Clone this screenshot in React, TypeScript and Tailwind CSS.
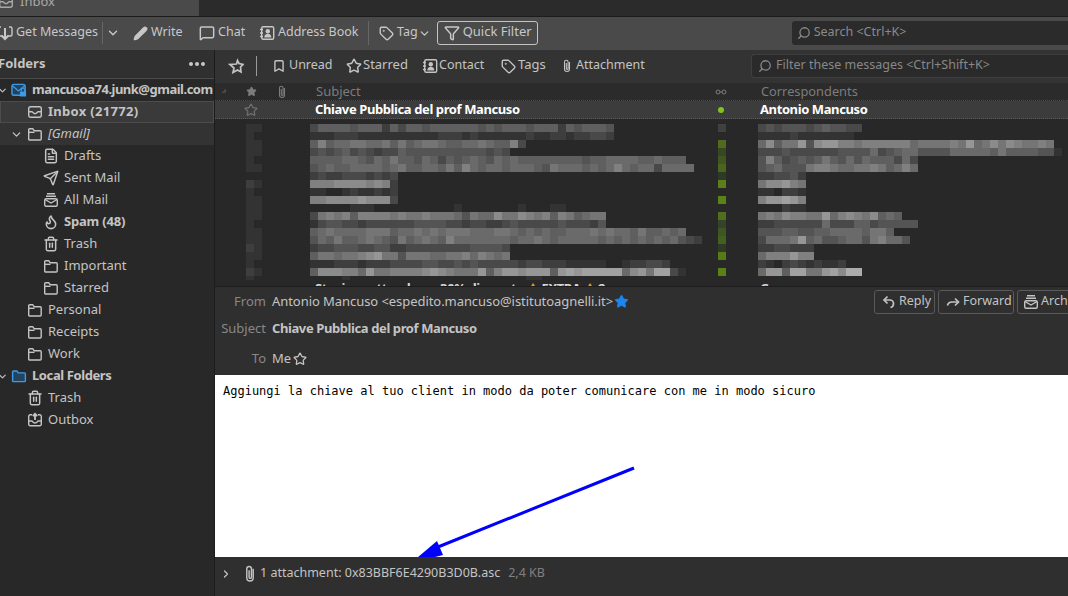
import type { ReactNode } from "react";
import {
  Bookmark,
  ChevronDown,
  ChevronRight,
  FileText,
  Flame,
  Funnel,
  MessageSquare,
  Pencil,
  Search,
  Send,
  Star,
  Tag,
  Trash2,
} from "lucide-react";

const subjectRows = [
  "35555455525355455555545455545552545554",
  "11122211111111112221211111121122122332",
  "585667766757567765566765583",
  "3434534323354444444444343",
  "55556654657554653545654656555555554556666556555",
  "456556666567556657586566566654766656568656636666",
  "23223332323",
  "88899998982",
  "11001211212",
  "889999a9993",
  "00000111000000000010000000100011000000",
  "3787858888787787776476697798785875677",
  "1344332333333444433233223433333433324",
  "56766667775667676777666776565655666767665755656",
  "4657556765475676586666666566765666665656565656432",
  "2334443344223333333344443",
  "57767789a7747776677868767",
  "111222122233334433434333332332221111100122332",
  "5999886a7788889a98777a58aa9aaa5ababbbbb69a7bb31",
  "0000100000000000000000000001100000000000000",
];

const correspondentRows = [
  "3434443454433",
  "1111211111110",
  "69577a49aa8878888886777787a6797987787",
  "33343333334444634566444466666575555441",
  "48534545754646555363",
  "45644478876677875686",
  "223342",
  "799a87",
  "110221",
  "8aaba8",
  "0002110000000",
  "78798877a689879565",
  "22333333633355344444",
  "44455445566665775",
  "36667a5644566478664",
  "2233222",
  "6888a88",
  "21023212112",
  "6aa5bb77ab9cc",
];

const greens = [
  "#404040", "", "#4f6b1f", "#37471f", "#3f5522", "#4a661e", "#2f3a26", "#5a7f1a", "",
  "#5c8215", "", "#4f6f1f", "#34432a", "#3f5522", "#44601f", "#2f3a26", "#557a16", "", "#5a8016",
];

const starRows = ["11", "10", "11", "11", "10", "11", "00", "21", "10", "11", "11", "11", "10", "11", "11", "21", "11", "10", "21", "10"];

const shade = (c: string) => {
  const v = 0x28 + parseInt(c, 16) * 11;
  return `rgb(${v},${v},${v})`;
};

function Pixels({ rows }: { rows: string[] }) {
  return (
    <div className="flex flex-col">
      {rows.map((row, i) => (
        <div key={i} className="flex h-[8px]">
          {row.split("").map((c, j) => (
            <div key={j} className="h-[8px] w-[8px]" style={{ backgroundColor: shade(c) }} />
          ))}
        </div>
      ))}
    </div>
  );
}

function GetMessagesIcon() {
  return (
    <svg className="shrink-0" width="16" height="16" viewBox="0 0 16 16" fill="none" stroke="currentColor" strokeWidth="1.4">
      <path d="M4 2H2.500A1.500 1.500 0 0 0 1 3.500v6A1.500 1.500 0 0 0 2.500 11H5M11 11h2.500A1.500 1.500 0 0 0 15 9.500v-6A1.500 1.500 0 0 0 13.500 2H12" />
      <path d="M8 3v11M4.500 10.500 8 14l3.500-3.500" strokeWidth="2" />
    </svg>
  );
}

function PinStarIcon() {
  return (
    <svg width="16" height="16" viewBox="0 0 16 16" fill="none" stroke="currentColor" strokeWidth="1.700">
      <path d="M9.500 2.500 8.500 6 2 6.500l4 3.500-1 4.500 4.500-2.500 3.500 2-.5-5 2.500-2.500-4-1z" />
    </svg>
  );
}

function FolderIcon({ className = "" }: { className?: string }) {
  return (
    <svg className={className} width="16" height="16" viewBox="0 0 16 16" fill="none" stroke="currentColor" strokeWidth="1.400">
      <path d="M1.700 13V3.700a1 1 0 0 1 1-1h3l1.500 2h6a1 1 0 0 1 1 1V13a1 1 0 0 1-1 1H2.700a1 1 0 0 1-1-1z" />
      <path d="M2 6.300h5.500" />
    </svg>
  );
}

function ClipIcon({ className = "", size = 14 }: { className?: string; size?: number }) {
  return (
    <svg className={`shrink-0 ${className}`} width={size} height={size} viewBox="0 0 14 14" fill="none" stroke="currentColor" strokeWidth="1.100">
      <path d="M9.500 3v7a2.500 2.500 0 0 1-5 0V3a1.800 1.800 0 0 1 3.600 0v6.500a.9.900 0 0 1-1.800 0V4" />
    </svg>
  );
}

function ContactIcon() {
  return (
    <svg className="shrink-0" width="16" height="16" viewBox="0 0 16 16" fill="none" stroke="currentColor" strokeWidth="1.400">
      <rect x="2.700" y="1.700" width="12" height="12.600" rx="1.500" />
      <path d="M1 4.500h3M1 8h3M1 11.500h3" />
      <circle cx="8.800" cy="6.300" r="2.200" fill="currentColor" stroke="none" />
      <path d="M5.300 12.500c0-2.600 1.500-3.700 3.500-3.700s3.500 1.100 3.500 3.700z" fill="currentColor" stroke="none" />
    </svg>
  );
}

function GlassesIcon() {
  return (
    <svg width="12" height="8" viewBox="0 0 12 8" fill="none" stroke="currentColor" strokeWidth="1">
      <circle cx="3" cy="4" r="2" />
      <circle cx="9" cy="4" r="2" />
      <path d="M5 4h2" />
    </svg>
  );
}

function AllMailIcon({ className = "" }: { className?: string }) {
  return (
    <svg className={`shrink-0 ${className}`} width="16" height="16" viewBox="0 0 16 16" fill="none" stroke="currentColor" strokeWidth="1.400">
      <path d="M4 1.700h8M3 4.200h10" />
      <rect x="1.700" y="6.700" width="12.600" height="7.600" rx="1.500" />
      <path d="M2 7.500 8 11l6-3.500" />
    </svg>
  );
}

function InboxIcon() {
  return (
    <svg className="shrink-0" width="16" height="16" viewBox="0 0 16 16" fill="none" stroke="currentColor" strokeWidth="1.400">
      <rect x="1.700" y="2.700" width="12.600" height="10.600" rx="2" />
      <path d="M2 7.700h3c.6 0 .7 2 3 2s2.400-2 3-2h3" />
    </svg>
  );
}

function OutboxIcon() {
  return (
    <svg width="16" height="16" viewBox="0 0 16 16" fill="none" stroke="currentColor" strokeWidth="1.400">
      <path d="M5 2.700H3.200A1.500 1.500 0 0 0 1.700 4.200v8.100a1.500 1.500 0 0 0 1.500 1.500h9.600a1.500 1.500 0 0 0 1.500-1.500V4.200a1.500 1.500 0 0 0-1.500-1.500H11" />
      <path d="M2 9h3c.6 0 .7 2 3 2s2.400-2 3-2h3" />
      <path d="M8 8V2M5.800 4 8 1.800 10.200 4" strokeWidth="1.800" />
    </svg>
  );
}

function AccountIcon() {
  return (
    <svg width="17" height="15" viewBox="0 0 17 15" fill="none">
      <rect x="1" y="1" width="14" height="11.500" rx="2" fill="#24435e" stroke="#3b9be8" strokeWidth="1.500" />
      <path d="M1.500 2.500 8 8l6.500-5.500" stroke="#3b9be8" strokeWidth="1.400" />
      <rect x="9.500" y="8.500" width="6.500" height="5.500" rx="1" fill="#3b9be8" />
      <path d="M11 8.500V7a1.700 1.700 0 0 1 3.400 0v1.500" stroke="#3b9be8" strokeWidth="1.100" />
    </svg>
  );
}

function ReplyIcon() {
  return (
    <svg className="shrink-0" width="14" height="14" viewBox="0 0 14 14" fill="none" stroke="currentColor" strokeWidth="1.700">
      <path d="M5.500 1.500 2 5l3.500 3.500" />
      <path d="M2.500 5H8a3.500 3.500 0 0 1 3.500 3.500c0 2-1 3.500-3 4" />
    </svg>
  );
}

function ForwardIcon() {
  return (
    <svg className="shrink-0" width="14" height="14" viewBox="0 0 14 14" fill="none" stroke="currentColor" strokeWidth="1.700">
      <path d="M9 3.500 12.500 7 9 10.500" />
      <path d="M12 7H6c-2.500 0-4 1.200-4.500 3.500" />
    </svg>
  );
}

function ToolItem({ icon, label, className = "" }: { icon: ReactNode; label: string; className?: string }) {
  return (
    <div className={`flex shrink-0 items-center whitespace-nowrap ${className}`}>
      {icon}
      <span className="pb-[2px]">{label}</span>
    </div>
  );
}

function FolderRow({
  icon,
  label,
  indent,
  gap = "w-[5px]",
  className = "",
  twisty,
}: {
  icon: ReactNode;
  label: string;
  indent: string;
  gap?: string;
  className?: string;
  twisty?: ReactNode;
}) {
  return (
    <div className={`flex h-[22px] shrink-0 items-center whitespace-nowrap text-[13px] text-[#c4c4c4] ${className}`}>
      <div className={`flex shrink-0 items-center justify-end ${indent}`}>{twisty}</div>
      <div className="flex w-[16px] shrink-0 justify-center">{icon}</div>
      <div className={`shrink-0 ${gap}`} />
      {label}
    </div>
  );
}

function HeaderButton({ icon, label, className = "" }: { icon: ReactNode; label: string; className?: string }) {
  return (
    <div className={`flex h-[24px] shrink-0 items-center gap-[2px] overflow-hidden whitespace-nowrap rounded-[3px] border border-[#5a5a5a] pl-[7px] text-[12.5px] text-[#c4c4c4] ${className}`}>
      {icon}
      <span className="pb-[2px]">{label}</span>
    </div>
  );
}

export default function App() {
  const folderIcon = <FolderIcon />;
  return (
    <div className="flex h-[596px] w-[1068px] flex-col overflow-hidden bg-[#282828] font-['Noto_Sans',sans-serif] text-[#c4c4c4]">
      <div className="flex h-[17px] shrink-0 border-b border-[#1c1c1c] bg-[#2b2b2b]">
        <div className="flex h-[16px] w-[199px] items-center overflow-hidden bg-[#4a4a4a]">
          <div className="-ml-[2px] flex -translate-y-[6px] items-center gap-[6px] text-[13px] text-[#a8a8a8]">
            <InboxIcon />
            <span>Inbox</span>
          </div>
        </div>
      </div>

      <div className="flex h-[33px] shrink-0 items-center overflow-hidden bg-[#4a4a4a] pb-[1px] text-[12.5px] text-[#c8c8c8]">
        <ToolItem className="-ml-[3px] w-[105px] gap-[3px]" icon={<GetMessagesIcon />} label="Get Messages" />
        <div className="h-[22px] w-px bg-[#666]" />
        <ChevronDown className="ml-[3px]" size={14} strokeWidth={2.4} />
        <ToolItem className="ml-[13px] w-[66px] gap-[3px]" icon={<Pencil size={15} strokeWidth={2} fill="currentColor" />} label="Write" />
        <ToolItem className="w-[60px] gap-[3px]" icon={<MessageSquare size={16} strokeWidth={2.2} />} label="Chat" />
        <ToolItem className="w-[109px] gap-[3px]" icon={<ContactIcon />} label="Address Book" />
        <div className="h-[24px] w-px bg-[#666]" />
        <ToolItem className="ml-[10px] gap-[3px]" icon={<Tag size={15} strokeWidth={2.2} />} label="Tag" />
        <ChevronDown size={13} strokeWidth={2.4} />
        <div className="ml-[6px] flex h-[24px] w-[101px] items-center gap-[3px] rounded-[3px] border border-[#c4c4c4] pl-[6px] text-[13px]">
          <Funnel size={16} strokeWidth={2.2} />
          <span className="pb-[2px]">Quick Filter</span>
        </div>
        <div className="ml-[254px] flex h-[24px] flex-1 items-center gap-[3px] rounded-l-[3px] bg-[#2b2b2b] pl-[5px] text-[#8a8a8a]">
          <Search className="-scale-x-100" size={14} strokeWidth={2.2} />
          <span className="pb-[2px]">Search &lt;Ctrl+K&gt;</span>
        </div>
      </div>

      <div className="flex min-h-0 flex-1">
        <div className="flex w-[215px] shrink-0 flex-col overflow-hidden border-r border-[#1c1c1c]">
          <div className="flex h-[29px] shrink-0 items-center justify-between border-b border-[#4a4a4a] bg-[#303030] pr-[9px]">
            <span className="-ml-[2px] text-[13px] font-bold text-[#c4c4c4]">Folders</span>
            <span className="flex gap-[2px]">
              <i className="h-[4px] w-[4px] rounded-full bg-[#c8c8c8]" />
              <i className="h-[4px] w-[4px] rounded-full bg-[#c8c8c8]" />
              <i className="h-[4px] w-[4px] rounded-full bg-[#c8c8c8]" />
            </span>
          </div>
          <FolderRow
            className="font-bold tracking-[-0.5px]"
            indent="w-[11px]"
            twisty={<ChevronDown className="-translate-x-[3px]" size={11} strokeWidth={2.4} />}
            icon={<AccountIcon />}
            label="mancusoa74.junk@gmail.com"
          />
          <FolderRow
            className="border border-[#4c4c4c] bg-[#3a3a3a] font-bold tracking-[0.3px]"
            indent="w-[26px]"
            icon={<InboxIcon />}
            label="Inbox (21772)"
          />
          <FolderRow
            className="bg-[#333333] italic text-[#8c8c8c]"
            indent="w-[27px]"
            twisty={<ChevronDown className="mr-[4px] text-[#c4c4c4]" size={13} strokeWidth={2.4} />}
            icon={<FolderIcon className="text-[#c4c4c4]" />}
            label="[Gmail]"
          />
          <FolderRow indent="w-[43px]" icon={<FileText size={16} strokeWidth={2.2} />} label="Drafts" />
          <FolderRow indent="w-[43px]" icon={<Send size={16} strokeWidth={2.2} />} label="Sent Mail" />
          <FolderRow indent="w-[43px]" icon={<AllMailIcon />} label="All Mail" />
          <FolderRow className="font-bold tracking-[-0.2px]" indent="w-[43px]" icon={<Flame size={16} strokeWidth={2.4} />} label="Spam (48)" />
          <FolderRow indent="w-[43px]" icon={<Trash2 size={16} strokeWidth={2.2} />} label="Trash" />
          <FolderRow indent="w-[43px]" icon={folderIcon} label="Important" />
          <FolderRow indent="w-[43px]" icon={folderIcon} label="Starred" />
          <FolderRow indent="w-[27px]" icon={folderIcon} label="Personal" />
          <FolderRow indent="w-[27px]" icon={folderIcon} label="Receipts" />
          <FolderRow indent="w-[27px]" icon={folderIcon} label="Work" />
          <FolderRow
            className="font-bold tracking-[-0.4px]"
            indent="w-[11px]"
            twisty={<ChevronDown className="-translate-x-[3px]" size={11} strokeWidth={2.4} />}
            icon={
              <svg width="17" height="16" viewBox="0 0 17 16" fill="#24435e" stroke="#3b9be8" strokeWidth="1.500">
                <path d="M1.700 13V3.700a1 1 0 0 1 1-1h3.500l1.500 2h6.600a1 1 0 0 1 1 1V13a1 1 0 0 1-1 1H2.700a1 1 0 0 1-1-1z" />
              </svg>
            }
            label="Local Folders"
          />
          <FolderRow indent="w-[27px]" icon={<Trash2 size={16} strokeWidth={2.2} />} label="Trash" />
          <FolderRow indent="w-[27px]" icon={<OutboxIcon />} label="Outbox" />
        </div>

        <div className="flex min-w-0 flex-1 flex-col">
          <div className="flex h-[33px] shrink-0 items-center overflow-hidden bg-[#333333] pb-[1px] text-[13px] text-[#c4c4c4]">
            <div className="ml-[13px] flex w-[28px]">
              <PinStarIcon />
            </div>
            <div className="h-[20px] w-px bg-[#9a9a9a]" />
            <ToolItem className="ml-[15px] w-[74px] gap-[3px] text-[12.5px]" icon={<Bookmark size={14} strokeWidth={2.4} />} label="Unread" />
            <ToolItem className="w-[76px] gap-[1px]" icon={<Star size={16} strokeWidth={2.2} />} label="Starred" />
            <ToolItem className="w-[79px] gap-[1px] text-[12.5px]" icon={<ContactIcon />} label="Contact" />
            <ToolItem className="w-[59px] gap-[2px]" icon={<Tag size={15} strokeWidth={2.2} />} label="Tags" />
            <ToolItem className="w-[100px] gap-[2px] text-[12.5px]" icon={<ClipIcon />} label="Attachment" />
            <div className="ml-[91px] flex h-[24px] flex-1 items-center gap-[4px] rounded-l-[3px] border border-r-0 border-[#3e3e3e] bg-[#2a2a2a] pl-[6px] text-[12.5px] text-[#888888]">
              <Search className="-scale-x-100" size={14} strokeWidth={2.2} />
              <span className="whitespace-nowrap pb-[2px]">Filter these messages &lt;Ctrl+Shift+K&gt;</span>
            </div>
          </div>

          <div className="flex h-[18px] shrink-0 items-center border-b border-dotted border-[#4a4a4a] bg-[#2b2b2b] text-[13px] text-[#7c7c7c]">
            <ChevronRight className="ml-[6px] rotate-45" size={7} strokeWidth={2.4} />
            <Star className="ml-[18px]" size={11} strokeWidth={2} fill="currentColor" />
            <ClipIcon className="ml-[18px]" />
            <span className="ml-[27px] w-[399px]">Subject</span>
            <div className="w-[46px]">
              <GlassesIcon />
            </div>
            <span className="text-[12.8px]">Correspondents</span>
          </div>

          <div className="flex h-[18px] shrink-0 items-center border-b border-dotted border-[#5a5a5a] bg-[#3c3c3c] text-[13px] font-bold tracking-[-0.4px] text-white">
            <Star className="ml-[29px] text-[#6e6e6e]" size={14} strokeWidth={2.2} />
            <span className="ml-[57px] w-[403px]">Chiave Pubblica del prof Mancuso</span>
            <span className="h-[6px] w-[6px] rounded-full bg-[#7fc41c]" />
            <span className="ml-[36px]">Antonio Mancuso</span>
          </div>

          <div className="flex h-[167px] shrink-0 flex-col overflow-hidden">
            <div className="flex h-[161px] shrink-0 overflow-hidden pt-[5px]">
              <div className="ml-[31px] w-[64px] shrink-0">
                <Pixels rows={starRows} />
              </div>
              <div className="w-[408px] shrink-0">
                <Pixels rows={subjectRows} />
              </div>
              <div className="w-[40px] shrink-0">
                {greens.map((c, i) => (
                  <div key={i} className="h-[8px] w-[8px]" style={{ backgroundColor: c || "#282828" }} />
                ))}
              </div>
              <div className="flex min-w-0 flex-1 flex-col">
                <Pixels rows={correspondentRows} />
              </div>
            </div>
            <div className="flex h-[18px] shrink-0 items-center text-[13px] font-bold tracking-[-0.4px] text-[#d8d8d8]">
              <span className="ml-[100px] w-[403px] whitespace-nowrap">
                Stavi aspettando un 30% di sconto <span className="text-[#f0a000]">⚠</span> EXTRA <span className="text-[#f0a000]">⚠</span> 2
              </span>
              <span className="h-[6px] w-[6px] rounded-full bg-[#5a8016]" />
              <span className="ml-[36px]">Groupon</span>
            </div>
          </div>

          <div className="flex h-[89px] shrink-0 border-t border-[#1c1c1c] bg-[#2f2f2f] text-[13px]">
            <div className="flex w-[51px] shrink-0 flex-col items-end text-[#888888]">
              <span className="mt-[5px] h-[27px]">From</span>
              <span className="h-[30px]">Subject</span>
              <span>To</span>
            </div>
            <div className="ml-[6px] flex w-[602px] shrink-0 flex-col text-[#c4c4c4]">
              <span className="mt-[5px] flex h-[27px] items-start whitespace-nowrap tracking-[-0.06px]">
                Antonio Mancuso &lt;espedito.mancuso@istitutoagnelli.it&gt;
                <Star className="ml-[1px] mt-[2px] text-[#1a86f0]" size={15} strokeWidth={1.5} fill="currentColor" />
              </span>
              <span className="h-[30px] font-bold tracking-[-0.4px]">Chiave Pubblica del prof Mancuso</span>
              <span className="flex items-start">
                Me
                <Star className="ml-[2px] mt-[3px]" size={14} strokeWidth={2.2} />
              </span>
            </div>
            <div className="mt-[3px] flex gap-[3px]">
              <HeaderButton className="w-[61px] !gap-[3px]" icon={<ReplyIcon />} label="Reply" />
              <HeaderButton className="w-[76px] !gap-[3px]" icon={<ForwardIcon />} label="Forward" />
              <HeaderButton className="w-[80px] !pl-[5px]" icon={<AllMailIcon />} label="Archive" />
            </div>
          </div>

          <div className="relative min-h-0 flex-1 overflow-hidden bg-white px-[8px] pt-[7px] font-['DejaVu_Sans_Mono',monospace] text-[12px] text-black">
            Aggiungi la chiave al tuo client in modo da poter comunicare con me in modo sicuro
            <svg className="absolute left-0 top-0" width="853" height="182" viewBox="0 0 853 182">
              <path d="M419 93 218 174" stroke="#0000ff" strokeWidth="3" />
              <path d="M222 166 228 180 196 188z" fill="#0000ff" />
            </svg>
          </div>

          <div className="flex h-[39px] shrink-0 items-center bg-[#2f2f2f] pb-[6px] text-[12.5px]">
            <ChevronRight className="ml-[5px]" size={12} strokeWidth={2.6} />
            <ClipIcon className="ml-[9px]" size={18} />
            <span className="ml-[1px]">1 attachment: 0x83BBF6E4290B3D0B.asc</span>
            <span className="ml-[8px] text-[#808080]">2,4 KB</span>
          </div>
        </div>
      </div>
    </div>
  );
}
